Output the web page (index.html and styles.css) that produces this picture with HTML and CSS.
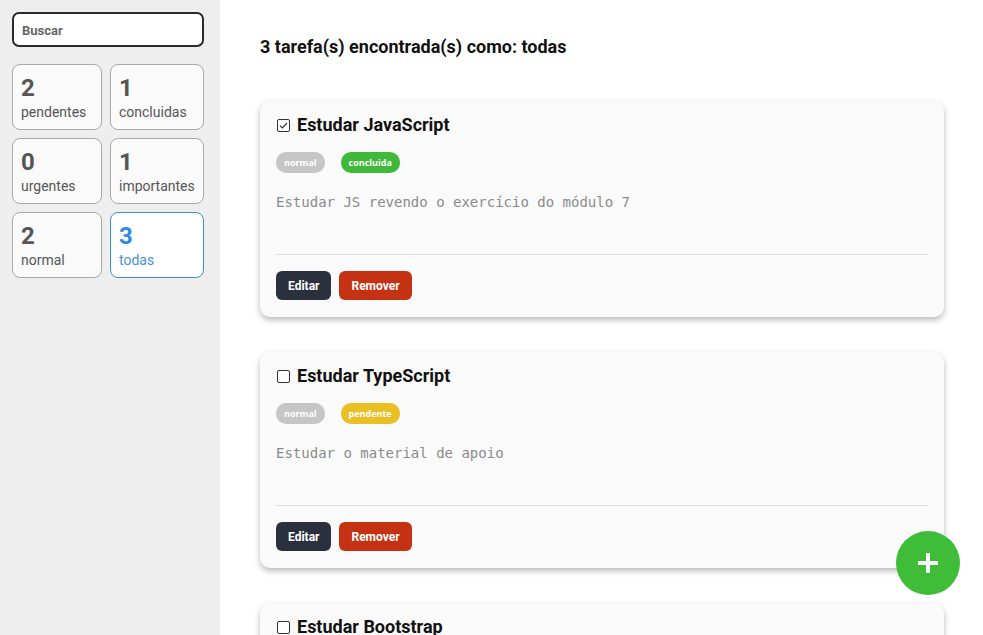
FILE: index.html
```html
<!DOCTYPE html>
<html lang="pt">
<head>
<meta charset="utf-8">
<title>Tarefas</title>
<link rel="stylesheet" href="styles.css">
</head>
<body>
<div class="layout">
  <aside class="sidebar">
    <input class="search" type="text" placeholder="Buscar">
    <div class="filters">
      <div class="filter"><span class="num">2</span><span class="lbl">pendentes</span></div>
      <div class="filter"><span class="num">1</span><span class="lbl">concluidas</span></div>
      <div class="filter"><span class="num">0</span><span class="lbl">urgentes</span></div>
      <div class="filter"><span class="num">1</span><span class="lbl">importantes</span></div>
      <div class="filter"><span class="num">2</span><span class="lbl">normal</span></div>
      <div class="filter active"><span class="num">3</span><span class="lbl">todas</span></div>
    </div>
  </aside>
  <main class="main">
    <h2 class="heading">3 tarefa(s) encontrada(s) como: todas</h2>
    <div class="list">
      <article class="task">
        <h3 class="task-title"><span class="check checked"><svg viewBox="0 0 13 13" width="13" height="13"><rect x="0.5" y="0.5" width="12" height="12" rx="1.5" fill="#fff" stroke="#333"/><path d="M3 6.6l2.4 2.4 4.6-5" fill="none" stroke="#333" stroke-width="1.2"/></svg></span>Estudar JavaScript</h3>
        <div class="tags"><span class="tag gray">normal</span><span class="tag green">concluida</span></div>
        <p class="desc">Estudar JS revendo o exercício do módulo 7</p>
        <div class="actions"><button class="btn dark">Editar</button><button class="btn red">Remover</button></div>
      </article>
      <article class="task">
        <h3 class="task-title"><span class="check"><svg viewBox="0 0 13 13" width="13" height="13"><rect x="0.5" y="0.5" width="12" height="12" rx="1.5" fill="#fff" stroke="#333"/></svg></span>Estudar TypeScript</h3>
        <div class="tags"><span class="tag gray">normal</span><span class="tag yellow">pendente</span></div>
        <p class="desc">Estudar o material de apoio</p>
        <div class="actions"><button class="btn dark">Editar</button><button class="btn red">Remover</button></div>
      </article>
      <article class="task">
        <h3 class="task-title"><span class="check"><svg viewBox="0 0 13 13" width="13" height="13"><rect x="0.5" y="0.5" width="12" height="12" rx="1.5" fill="#fff" stroke="#333"/></svg></span>Estudar Bootstrap</h3>
        <div class="tags"><span class="tag gray">normal</span><span class="tag yellow">pendente</span></div>
        <p class="desc">Estudar o framework Bootstrap</p>
        <div class="actions"><button class="btn dark">Editar</button><button class="btn red">Remover</button></div>
      </article>
    </div>
  </main>
</div>
<button class="fab" aria-label="Adicionar"><svg viewBox="0 0 24 24" width="24" height="24"><path d="M12 2v20M2 12h20" stroke="#fff" stroke-width="4" stroke-linecap="butt"/></svg></button>
</body>
</html>
```
FILE: styles.css
```css
* { box-sizing: border-box; }
html, body { margin: 0; padding: 0; }
body {
  font-family: Roboto, "Liberation Sans", sans-serif;
  background: #fff;
  color: #000;
}
.layout {
  display: flex;
  min-height: 100vh;
}
.sidebar {
  width: 220px;
  flex-shrink: 0;
  background: #eeeeee;
  padding: 12px 16px 12px 12px;
}
.search {
  display: block;
  width: 192px;
  height: 35px;
  border: 2px solid #2b2b2b;
  border-radius: 7px;
  background: #fff;
  padding: 1px 8px 0 8px;
  font-family: Roboto, sans-serif;
  font-weight: 700;
  font-size: 13px;
  outline: none;
}
.search::placeholder { color: #666; }
.filters {
  display: grid;
  grid-template-columns: 90px 94px;
  grid-auto-rows: 66px;
  gap: 8px;
  margin-top: 17px;
}
.filter {
  background: #fafafa;
  border: 1px solid #a9a9a9;
  border-radius: 8px;
  padding: 8px 8px 0 8px;
  display: flex;
  flex-direction: column;
  color: #555;
}
.filter .num {
  font-size: 24px;
  font-weight: 700;
  line-height: 30px;
}
.filter .lbl {
  font-size: 14px;
  line-height: 16px;
  margin-top: 1px;
}
.filter.active {
  background: #fff;
  border-color: #3a8fd9;
  color: #2f8ae0;
}
.filter.active .lbl { color: #4a90d6; }
.main {
  flex: 1;
  padding: 36px 39px 40px 40px;
}
.heading {
  margin: 0;
  font-size: 18px;
  font-weight: 700;
  line-height: 22px;
  color: #111;
}
.list {
  display: flex;
  flex-direction: column;
  gap: 35px;
  margin-top: 43px;
}
.task {
  background: #fafafa;
  border-radius: 10px;
  box-shadow: 0 3px 6px rgba(0,0,0,0.28);
  padding: 13px 16px 17px 16px;
  height: 216px;
  display: flex;
  flex-direction: column;
}
.task-title {
  margin: 0;
  font-size: 18px;
  font-weight: 700;
  line-height: 22px;
  display: flex;
  align-items: center;
  color: #111;
}
.check {
  display: inline-flex;
  width: 13px;
  height: 13px;
  margin: 0 7px 0 1px;
}
.tags {
  display: flex;
  gap: 16px;
  margin-top: 16px;
}
.tag {
  display: inline-flex;
  align-items: center;
  height: 21px;
  padding: 0 8px;
  border-radius: 10px;
  font-family: "Open Sans", sans-serif;
  font-size: 9px;
  font-weight: 700;
  color: #fff;
}
.tag.gray { background: #c6c6c6; }
.tag.green { background: #40b93a; }
.tag.yellow { background: #eabf25; }
.desc {
  margin: 19px 0 0 0;
  font-family: "DejaVu Sans Mono", "Liberation Mono", monospace;
  font-size: 14px;
  line-height: 20px;
  color: #8a8a8a;
  flex: 1;
  border-bottom: 1px solid #dedede;
}
.actions {
  display: flex;
  gap: 8px;
  margin-top: 16px;
}
.btn {
  height: 29px;
  border: none;
  border-radius: 6px;
  padding: 0 12px;
  font-family: Roboto, sans-serif;
  font-weight: 700;
  font-size: 12px;
  color: #fff;
  cursor: pointer;
}
.btn.dark { background: #2b313c; }
.btn.red { background: #c43213; }
.fab {
  position: fixed;
  right: 23px;
  bottom: 40px;
  width: 64px;
  height: 64px;
  border-radius: 50%;
  border: none;
  background: #3fbc38;
  display: flex;
  align-items: center;
  justify-content: center;
  padding: 0;
}
```
